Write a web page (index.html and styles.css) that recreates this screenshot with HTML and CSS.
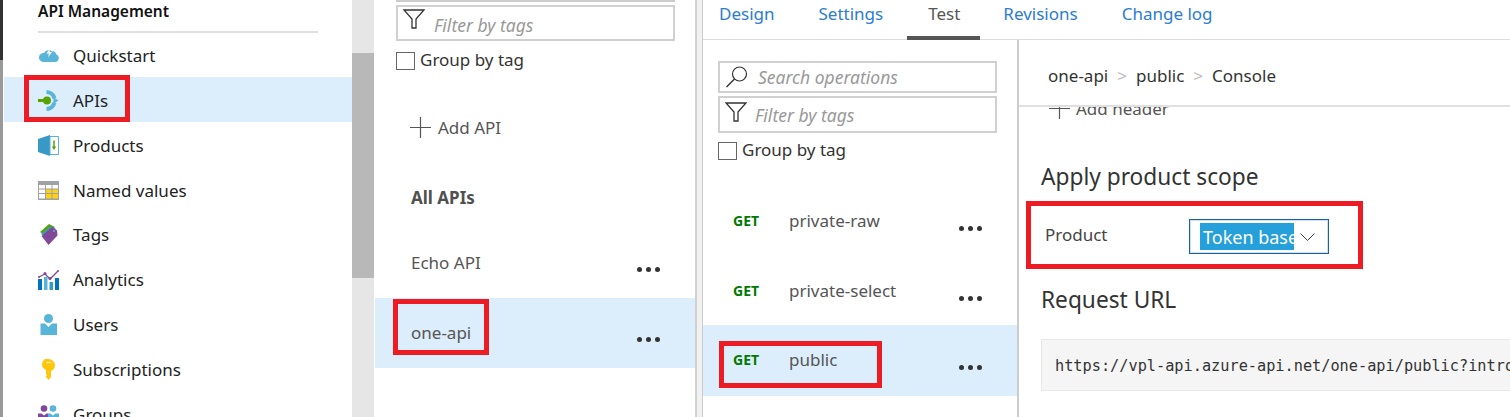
FILE: index.html
```html
<!DOCTYPE html>
<html lang="en">
<head>
    <meta charset="UTF-8">
    <title>API Management - APIs</title>
    <link rel="stylesheet" href="styles.css">
</head>
<body>
    <div class="page">
        <div class="edge"></div>

        <div class="sidebar">
            <div class="side-title">API Management</div>
            <div class="side-row">
                <svg class="side-icon" viewBox="0 0 21 21"><path d="M5 17h12a4 4 0 0 0 1-7.800 3 3 0 0 0-4-2.700 5 5 0 0 0-8 1.500 4.500 4.500 0 0 0-1 9z" fill="#59b4d9"/><path d="M12 3l-3.500 5.500h2.500l-1 4 4-5.500h-2.500z" fill="#fff"/></svg>
                <span>Quickstart</span>
            </div>
            <div class="side-row active">
                <svg class="side-icon" viewBox="0 0 21 21"><path d="M8.500 2a8.500 8.500 0 0 1 8 6.500M16.500 12.500a8.500 8.500 0 0 1-8 6.500" fill="none" stroke="#59b4d9" stroke-width="4"/><path d="M15.500 7.500l5 3-5 3z" fill="#59b4d9"/><circle cx="9" cy="10.500" r="4" fill="#57a300"/><rect x="0" y="9" width="8" height="3" fill="#57a300"/></svg>
                <span>APIs</span>
            </div>
            <div class="side-row">
                <svg class="side-icon" viewBox="0 0 21 21"><path d="M0 4l12-4v21l-12-4z" fill="#3999c6"/><path d="M12 1.500h8.500v18h-8.500z" fill="#fff" stroke="#59b4d9"/><path d="M16 5.500v8" stroke="#57a300" stroke-width="1.500"/><path d="M13.800 11.500h4.400l-2.200 3.500z" fill="#57a300"/></svg>
                <span>Products</span>
            </div>
            <div class="side-row">
                <svg class="side-icon" viewBox="0 0 21 21"><rect y="1" width="21" height="19" fill="#a0a1a2"/><path d="M1 5h6v3.500h-6zM8 5h5.500v3.500h-5.500zM14.500 5h5.500v3.500h-5.500zM1 9.500h6v3.500h-6zM1 14h6v4.500h-6z" fill="#fff"/><path d="M8 9.500h5.500v3.500h-5.500zM14.500 9.500h5.500v3.500h-5.500zM8 14h5.500v4.500h-5.500zM14.500 14h5.500v4.500h-5.500z" fill="#fcd116"/></svg>
                <span>Named values</span>
            </div>
            <div class="side-row">
                <svg class="side-icon" viewBox="0 0 21 21"><path d="M2 8l9-8 6 3-9 9z" fill="#57a300"/><path d="M3 10l10-8 5 3-8 10z" fill="#3999c6"/><path d="M3.500 12l10.500-9 5 3.500.5 5-9 9.500z" fill="#804998"/><circle cx="16" cy="7" r="1" fill="#59b4d9"/></svg>
                <span>Tags</span>
            </div>
            <div class="side-row">
                <svg class="side-icon" viewBox="0 0 21 21"><path d="M1 8l6-3 5 5 8-8" fill="none" stroke="#804998" stroke-width="1.300"/><circle cx="7" cy="4.500" r="1.500" fill="#804998"/><circle cx="12" cy="9.500" r="1.500" fill="#804998"/><circle cx="20" cy="2" r="1" fill="#804998"/><circle cx="1" cy="8" r="1" fill="#804998"/><path d="M0 10h4v11h-4zM17 9h4v12h-4z" fill="#0072c6"/><path d="M6 8h3.500v13h-3.500z" fill="#59b4d9"/><path d="M11.500 13h3.500v8h-3.500z" fill="#3999c6"/></svg>
                <span>Analytics</span>
            </div>
            <div class="side-row">
                <svg class="side-icon" viewBox="0 0 21 21"><circle cx="10.500" cy="4.500" r="4.500" fill="#59b4d9"/><path d="M2.500 9.500h4.500l3.500 3.500 3.500-3.500h5v11.500h-16.500z" fill="#59b4d9"/></svg>
                <span>Users</span>
            </div>
            <div class="side-row">
                <svg class="side-icon" viewBox="0 0 21 21"><path d="M10.500 0a6.500 6.500 0 0 1 6.500 6.500c0 2.500-1.500 4.500-4 5.500v6l-2.500 3-2.500-3v-1l1-1-1-1v-4c-2.500-1-4-3-4-5.500a6.500 6.500 0 0 1 6.500-6.500z" fill="#ffc60a"/><path d="M8 3.500h5" stroke="#fff0a8" stroke-width="1.200"/></svg>
                <span>Subscriptions</span>
            </div>
            <div class="side-row">
                <svg class="side-icon" viewBox="0 0 21 21"><circle cx="6" cy="4.500" r="3.300" fill="#804998"/><path d="M0 9.500h3.500l2.500 2 2.500-2h1.500v8h-10z" fill="#804998"/><circle cx="15" cy="4.500" r="3.300" fill="#59b4d9"/><path d="M10 9.500h2.500l2.500 2 2.500-2h3.500v8h-11z" fill="#59b4d9"/></svg>
                <span>Groups</span>
            </div>
        </div>

        <div class="scrollbar"><div class="thumb"></div></div>

        <div class="api-panel">
            <div class="cut-box"></div>
            <div class="box filter-box">
                <svg class="funnel" viewBox="0 0 22 20"><path d="M1 1h20l-8 9v9h-4v-9z" fill="#fff" stroke="#333" stroke-width="1.300"/></svg>
                <span>Filter by tags</span>
            </div>
            <div class="group-row">
                <span class="check"></span>
                <span>Group by tag</span>
            </div>
            <div class="add-row">
                <svg class="plus" viewBox="0 0 21 21"><path d="M10.500 0v21M0 10.500h21" stroke="#555" stroke-width="1.200"/></svg>
                <span>Add API</span>
            </div>
            <div class="all-apis">All APIs</div>
            <div class="list-row api-row">
                <span class="row-name">Echo API</span>
                <span class="dots"><i></i><i></i><i></i></span>
            </div>
            <div class="list-row api-row active">
                <span class="row-name">one-api</span>
                <span class="dots"><i></i><i></i><i></i></span>
            </div>
        </div>

        <div class="gutter"></div>

        <div class="main">
            <div class="tabs">
                <a class="tab">Design</a>
                <a class="tab">Settings</a>
                <a class="tab current">Test</a>
                <a class="tab">Revisions</a>
                <a class="tab">Change log</a>
            </div>
            <div class="main-body">
                <div class="ops">
                    <div class="box search-box">
                        <svg class="lens" viewBox="0 0 22 22"><circle cx="13.500" cy="8" r="7" fill="none" stroke="#333" stroke-width="1.200"/><path d="M8.500 13l-8 8" stroke="#333" stroke-width="1.400"/></svg>
                        <span>Search operations</span>
                    </div>
                    <div class="box ops-filter">
                        <svg class="funnel" viewBox="0 0 22 20"><path d="M1 1h20l-8 9v9h-4v-9z" fill="#fff" stroke="#333" stroke-width="1.300"/></svg>
                        <span>Filter by tags</span>
                    </div>
                    <div class="group-row ops-group">
                        <span class="check"></span>
                        <span>Group by tag</span>
                    </div>
                    <div class="op-list">
                        <div class="list-row op-row">
                            <span class="verb">GET</span>
                            <span class="row-name">private-raw</span>
                            <span class="dots"><i></i><i></i><i></i></span>
                        </div>
                        <div class="list-row op-row">
                            <span class="verb">GET</span>
                            <span class="row-name">private-select</span>
                            <span class="dots"><i></i><i></i><i></i></span>
                        </div>
                        <div class="list-row op-row active">
                            <span class="verb">GET</span>
                            <span class="row-name">public</span>
                            <span class="dots"><i></i><i></i><i></i></span>
                        </div>
                    </div>
                </div>

                <div class="detail">
                    <div class="crumbs">
                        <span>one-api</span><span class="sep">&gt;</span><span>public</span><span class="sep">&gt;</span><span>Console</span>
                    </div>
                    <div class="console">
                        <div class="add-header">
                            <svg class="plus" viewBox="0 0 21 21"><path d="M10.500 0v21M0 10.500h21" stroke="#555" stroke-width="1.200"/></svg>
                            <span>Add header</span>
                        </div>
                        <h2 class="scope-title">Apply product scope</h2>
                        <div class="product-row">
                            <span class="product-label">Product</span>
                            <div class="select">
                                <span class="select-value">Token based</span>
                                <svg class="chevron" viewBox="0 0 15 8"><path d="M.5.500l7 7 7-7" fill="none" stroke="#444" stroke-width="1"/></svg>
                            </div>
                        </div>
                        <h2 class="url-title">Request URL</h2>
                        <div class="url-box">https://vpl-api.azure-api.net/one-api/public?introspect=true</div>
                    </div>
                </div>
            </div>
        </div>

        <!-- red boxes drawn over the screenshot -->
        <div class="mark mark-apis"></div>
        <div class="mark mark-oneapi"></div>
        <div class="mark mark-public"></div>
        <div class="mark mark-product"></div>
    </div>
</body>
</html>
```

FILE: styles.css
```css
* {
    margin: 0;
    padding: 0;
    box-sizing: border-box;
}

body {
    font-family: "Noto Sans", "Open Sans", sans-serif;
    font-size: 17px;
    color: #222;
    background: white;
    overflow: hidden;
}

.page {
    position: relative;
    display: flex;
    width: 1510px;
    height: 417px;
    overflow: hidden;
}

.edge {
    width: 3px;
    margin-right: 1px;
    background: linear-gradient(#333 0, #333 60px, #999 60px, #999 100%);
}

.sidebar {
    width: 348px;
}

.side-title {
    width: 280px;
    height: 33px;
    margin: 0 0 -0.6px 34px;
    line-height: 22px;
    font-size: 15.5px;
    font-weight: 600;
    color: #111;
    border-bottom: 2px solid #e0e0e0;
}

.side-row {
    display: flex;
    align-items: center;
    height: 44.9px;
    padding: 1px 0 0 34px;
}

.side-row.active {
    background: #dcedfb;
}

.side-icon {
    width: 21px;
    height: 21px;
    margin-right: 14px;
    flex-shrink: 0;
}

.scrollbar {
    width: 22px;
    padding-top: 53px;
    margin-right: 1px;
    background: #e6e6e6;
}

.thumb {
    height: 225px;
    background: #b8b8b8;
}

.api-panel {
    width: 320px;
}

.cut-box {
    height: 2px;
    margin: 0 20px 0 21px;
    border-bottom: 2px solid #ccc;
}

.box {
    display: flex;
    align-items: center;
    border: 2px solid #d0d0d0;
    font-style: italic;
    color: #999;
    font-size: 17.5px;
}

.funnel {
    width: 22px;
    height: 20px;
    flex-shrink: 0;
}

.filter-box {
    width: 279px;
    height: 36px;
    margin: 3px 0 0 21px;
    padding: 4px 0 0 5px;
}

.filter-box .funnel {
    margin: -12px 9px 0 0;
}

.group-row {
    display: flex;
    align-items: center;
    height: 20px;
    margin: 8px 0 0 21px;
    color: #333;
}

.check {
    width: 19px;
    height: 18px;
    margin: 3px 5px 0 0;
    border: 1px solid #666;
    background: white;
}

.add-row {
    display: flex;
    align-items: center;
    height: 24px;
    margin: 46px 0 0 35px;
    color: #555;
}

.plus {
    width: 21px;
    height: 21px;
    margin-right: 7px;
}

.all-apis {
    height: 24px;
    margin: 47px 0 0 36px;
    line-height: 24px;
    font-weight: 700;
    color: #505050;
}

.list-row {
    display: flex;
    align-items: center;
    height: 70.500px;
    color: #555;
}

.list-row.active {
    background: #dcedfb;
}

.api-row {
    padding: 0 35px 0 36px;
}

.all-apis + .api-row {
    margin-top: 17px;
}

.row-name {
    flex: 1;
}

.dots {
    display: flex;
    gap: 4px;
    margin-top: 14px;
}

.dots i {
    width: 5px;
    height: 5px;
    border-radius: 50%;
    background: #333;
}

.gutter {
    width: 8px;
    background: #f1f1f1;
    border-left: 2px solid #d0d0d0;
    border-right: 1px solid #ccc;
}

.main {
    flex: 1;
    min-width: 0;
}

.tabs {
    display: flex;
    height: 40px;
    border-bottom: 1px solid #dcdcdc;
}

.tab {
    height: 40px;
    padding: 0 22px;
    line-height: 28px;
    color: #2b7cd3;
}

.tab:first-child {
    margin-left: -6px;
}

.tab.current {
    padding: 0 20px 0 21px;
    margin: 0 1px 0 2px;
    color: #555;
    border-bottom: 4px solid #555;
}

.main-body {
    display: flex;
    height: 377px;
}

.ops {
    width: 316px;
    padding-top: 21px;
    border-right: 2px solid #ccc;
}

.search-box {
    width: 279px;
    height: 32px;
    margin-left: 15px;
    padding-left: 6px;
}

.lens {
    width: 22px;
    height: 22px;
    margin-right: 10px;
}

.ops-filter {
    width: 279px;
    height: 37px;
    margin: 3px 0 0 15px;
    padding-left: 5px;
}

.ops-filter .funnel {
    margin: -6px 8px 0 0;
}

.ops-group {
    margin: 6px 0 0 15px;
}

.op-list {
    margin-top: 27px;
}

.op-row {
    height: 70px;
    padding: 0 35px 2px 30px;
}

.op-row .dots {
    margin-top: 16px;
}

.op-row.active {
    height: 71px;
    margin-top: -1px;
}

.verb {
    width: 56px;
    font-size: 14px;
    font-weight: 700;
    color: #007a00;
}

.detail {
    flex: 1;
    min-width: 0;
}

.crumbs {
    position: relative;
    display: flex;
    align-items: center;
    height: 67px;
    padding: 5px 0 0 29px;
    color: #333;
    border-bottom: 2px solid #e0e0e0;
    background: white;
}

.sep {
    margin: 0 9px;
    color: #bbb;
}

.console {
    height: 310px;
    padding-left: 22px;
    overflow: hidden;
}

.add-header {
    display: flex;
    align-items: center;
    height: 24px;
    margin: -11px 0 0 8px;
    color: #555;
}

.add-header .plus {
    margin-right: 6px;
}

.scope-title {
    height: 32px;
    margin-top: 41px;
    line-height: 32px;
    font-size: 22.7px;
    font-weight: 400;
    color: #333;
}

.product-row {
    display: flex;
    align-items: flex-start;
    margin-top: 26px;
}

.product-label {
    width: 144px;
    margin-left: 4px;
    line-height: 31px;
    color: #444;
}

.select {
    display: flex;
    align-items: center;
    width: 140px;
    height: 35px;
    padding-left: 10px;
    border: 1px solid #1a5fa5;
    box-shadow: inset 0 0 0 1px #cfe0f0;
}

.select-value {
    width: 94px;
    height: 27px;
    padding-left: 3px;
    line-height: 28px;
    font-size: 18px;
    color: white;
    background: #26a0da;
    white-space: nowrap;
    overflow: hidden;
}

.chevron {
    width: 15px;
    height: 8px;
    margin-left: 6px;
}

.url-title {
    height: 32px;
    margin-top: 30px;
    line-height: 32px;
    font-size: 22.7px;
    font-weight: 400;
    color: #333;
}

.url-box {
    height: 52px;
    margin-top: 23px;
    padding-left: 13px;
    line-height: 52px;
    font-family: "DejaVu Sans Mono", monospace;
    font-size: 15.250px;
    color: #333;
    white-space: nowrap;
    background: #f5f5f5;
    border: 1px solid #e8e8e8;
    border-right: 0;
}

.mark {
    position: absolute;
    border: 5px solid #ed1c24;
}

.mark-apis {
    left: 24px;
    top: 75px;
    width: 106px;
    height: 47px;
}

.mark-oneapi {
    left: 393px;
    top: 299px;
    width: 96px;
    height: 56px;
}

.mark-public {
    left: 719px;
    top: 341px;
    width: 163px;
    height: 47px;
}

.mark-product {
    left: 1026px;
    top: 201px;
    width: 337px;
    height: 68px;
}
```
